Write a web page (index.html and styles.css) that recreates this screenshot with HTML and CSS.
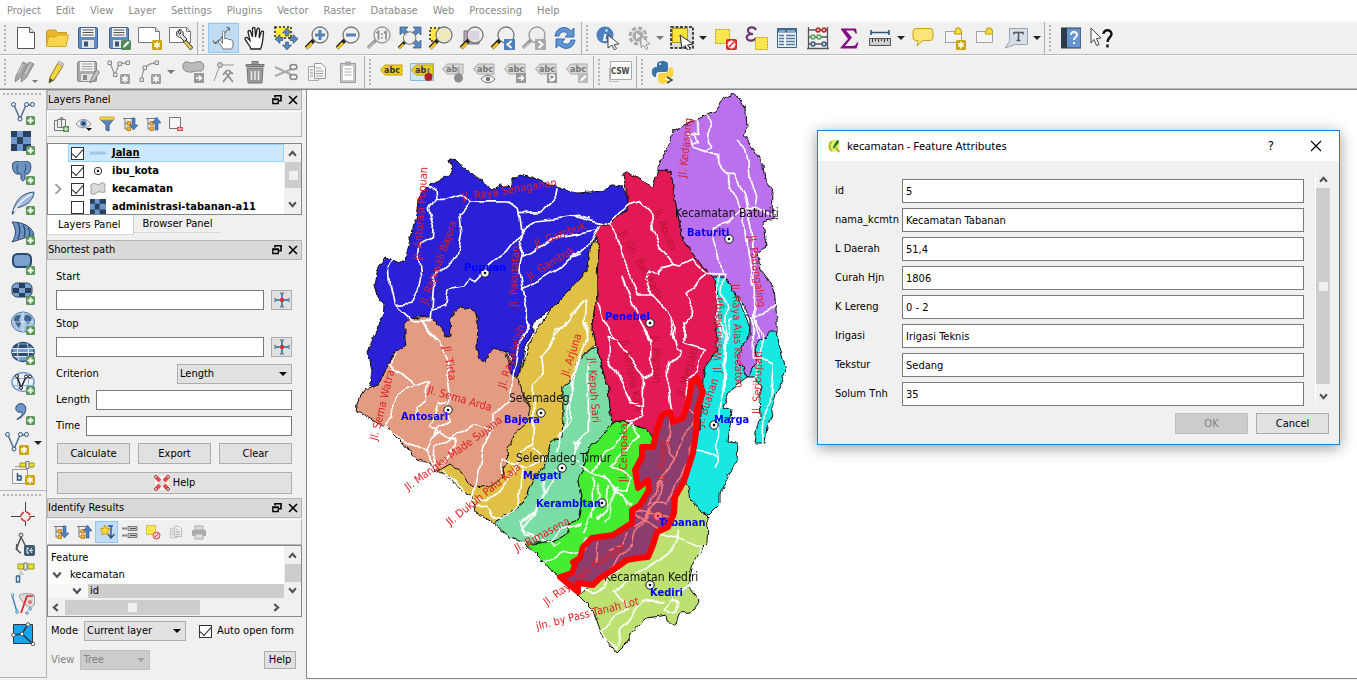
FILE: index.html
```html
<!DOCTYPE html>
<html lang="en">
<head>
<meta charset="utf-8">
<title>QGIS</title>
<link rel="stylesheet" href="styles.css">
</head>
<body>
<svg class="sprite" aria-hidden="true">
<defs>
<symbol id="b-plus" viewBox="0 0 24 24"><rect x="15" y="15" width="9" height="9" rx="1.5" fill="#5a9456"/><path d="M19.500 16.500v6M16.500 19.500h6" stroke="#fff" stroke-width="2"/></symbol>
<symbol id="b-star" viewBox="0 0 24 24"><rect x="14" y="14" width="10" height="10" rx="1.500" fill="#c8a40a"/><path d="M19 15.500v7M16 17.300l6 3.400M22 17.300l-6 3.400" stroke="#fff" stroke-width="1.500"/></symbol>
<symbol id="b-gstar" viewBox="0 0 24 24"><rect x="13" y="14" width="10" height="10" rx="1.500" fill="#9c9c9c"/><path d="M18 15.500v7M15 17.300l6 3.400M21 17.300l-6 3.400" stroke="#fff" stroke-width="1.500"/></symbol>
<symbol id="mag" viewBox="0 0 24 24"><path d="M9 14l-8 8" stroke="#222" stroke-width="4"/><path d="M7 17l-5.500 5.500" stroke="#f5c31c" stroke-width="2.500"/><circle cx="15" cy="9" r="8" fill="#f0f0ee" fill-opacity=".85" stroke="#777" stroke-width="1.300"/></symbol>
<symbol id="gmag" viewBox="0 0 24 24"><path d="M9 14l-8 8" stroke="#999" stroke-width="3.500"/><path d="M7 17l-5.500 5.500" stroke="#ccc" stroke-width="1.500"/><circle cx="15" cy="9" r="8" fill="#eee" stroke="#999" stroke-width="1.300"/></symbol>
<symbol id="new" viewBox="0 0 24 24"><path d="M3.500 1.500h12l5 5v16h-17z" fill="#fff" stroke="#555"/><path d="M15.500 1.500v5h5" fill="#ddd" stroke="#555"/></symbol>
<symbol id="open" viewBox="0 0 24 24"><path d="M1.500 20V5.500l2-1.500h7l2 2.500h9V12" fill="#e9b62a" stroke="#c79a1c"/><path d="M1.500 20.500l2-9.500h7l2-2h11l-2.500 11.500z" fill="#fad64f" stroke="#d5a824"/></symbol>
<symbol id="save" viewBox="0 0 24 24"><rect x="2.500" y="1.500" width="19" height="21" rx="1.500" fill="#5e8cc2" stroke="#3f6693"/><path d="M5 2h14v9H5z" fill="#f4f4f4"/><path d="M6.500 4h11M6.500 6.500h11M6.500 9h11" stroke="#555"/><path d="M6 14h12v8H6z" fill="#e4e4e4"/><path d="M8 15.500h4v5H8z" fill="#34567e"/></symbol>
<symbol id="gsave" viewBox="0 0 24 24"><rect x="1.500" y="1.500" width="19" height="20" rx="1.500" fill="#aaa" stroke="#8a8a8a"/><path d="M4 2h14v9H4z" fill="#f4f4f4"/><path d="M5.500 4h11M5.500 6.500h11M5.500 9h11" stroke="#999"/><path d="M5 14h12v7H5z" fill="#e4e4e4"/><path d="M7 15h4v5H7z" fill="#888"/><path d="M14 23l1.500-5 5-8 3 2-5 8z" fill="#c4c4c4" stroke="#808080"/></symbol>
<symbol id="saveas" viewBox="0 0 24 24"><use href="#save"/><rect x="14" y="14" width="10" height="10" rx="1.500" fill="#4f8a58"/><path d="M16 22l1-3 4-4 1.500 1.500-4 4z" fill="#fff"/></symbol>
<symbol id="layout" viewBox="0 0 24 24"><path d="M.5 1.500h17l4 4v11H.5z" fill="#fff" stroke="#777"/><path d="M17.500 1.500v4h4" fill="#ddd" stroke="#777"/><use href="#b-star"/></symbol>
<symbol id="manager" viewBox="0 0 24 24"><path d="M.5 1.500h17l4 4v11H.5z" fill="#fff" stroke="#777"/><path d="M17.500 1.500v4h4" fill="none" stroke="#777"/><path d="M15 14l8 9" stroke="#444" stroke-width="4"/><path d="M16 15.500l6.500 7" stroke="#f0cc50" stroke-width="2.500"/><path d="M9 4.500c-3 3-1 7 2.500 7l4 4 2.500-2.500-4-4c1-3-1-5.500-4-5.500l2 3.500-1.500 1.500z" fill="#ddd" stroke="#333"/></symbol>
<symbol id="touch" viewBox="0 0 24 24"><path d="M11 23c-1-3-4-5-5-8 0-1.500 2-1.500 3 .5l1.500 2V6.500c0-2 2.300-2 2.300 0V13c1.500-1 3-.5 3.700.5 3-.5 4.500 1 4.500 3.500v3l-1.500 3z" fill="#fff" stroke="#777"/><path d="M3 16.500c3-1 6-3 7-6M13 7c1-2 2-3 4-4.500M1 14.500l1.500 3 3-.5M14.500 1.500l3 .5-.5 3" fill="none" stroke="#555"/></symbol>
<symbol id="hand" viewBox="0 0 24 24"><path d="M8 23c-1-4-5-7-6-10 0-2 2-2 3-.5l2 2L5 6c0-2 2.300-2 2.800 0L9.500 11V3c0-2 2.500-2 2.500 0l.5 8L14 3.500c.5-2 2.500-1.500 2.500.5L16.200 12l2-6c.5-1.500 2.800-1 2.300.5-.5 4-.5 11-3 16.500z" fill="#fff" stroke="#222" stroke-width="1.300"/></symbol>
<symbol id="panto" viewBox="0 0 24 24"><path d="M1 1h16v11H1z" fill="#ffec3d" stroke="#222" stroke-width="1.500" stroke-dasharray="2 2"/><path d="M13 2l4.500 5h-3v3h-3V7h-3zM13 24l4.500-5h-3v-3h-3v3h-3zM1 13l5-4.500v3h3v3H6v3zM24 13l-5-4.500v3h-3v3h3v3z" fill="#5a86bf" stroke="#35567f" stroke-width=".7"/></symbol>
<symbol id="zin" viewBox="0 0 24 24"><use href="#mag"/><path d="M15 4v10M10 9h10" stroke="#5383b8" stroke-width="3"/></symbol>
<symbol id="zout" viewBox="0 0 24 24"><use href="#mag"/><path d="M10 9h10" stroke="#5383b8" stroke-width="3"/></symbol>
<symbol id="z11" viewBox="0 0 24 24"><use href="#gmag"/><path d="M9.500 7l2-1.500v8M17 7l2-1.500v8M14.800 7.500v1.500M14.800 11v1.500" fill="none" stroke="#888" stroke-width="1.600"/></symbol>
<symbol id="zfull" viewBox="0 0 24 24"><path d="M2 1h8L7.500 3.500 11 7 8 10 4.500 6.500 2 9zM23 1h-8l2.500 2.500L14 7l3 3 3.500-3.500L23 9zM23 22h-8l2.500-2.500L14 16l3-3 3.500 3.500L23 14z" fill="#5a86bf" stroke="#35567f" stroke-width=".7"/><g transform="translate(0 5) scale(.78)"><use href="#mag" width="24" height="24"/></g></symbol>
<symbol id="zsel" viewBox="0 0 24 24"><path d="M1 2h13v13H1z" fill="#ffe640" stroke="#222" stroke-width="1.500" stroke-dasharray="2 2"/><use href="#mag"/><circle cx="15" cy="9" r="6.500" fill="#f0eabb"/></symbol>
<symbol id="zlay" viewBox="0 0 24 24"><path d="M4 5h15v13H4z" fill="#b9a9bd" stroke="#806f85"/><use href="#mag"/><path d="M9 5h10v9H9z" fill="#d5ccd8" opacity=".7"/></symbol>
<symbol id="zprev" viewBox="0 0 24 24"><use href="#mag"/><path d="M13 13h11v11H13z" fill="#4e80b7"/><path d="M20.500 15l-4 3.500 4 3.500" fill="none" stroke="#fff" stroke-width="2"/></symbol>
<symbol id="znext" viewBox="0 0 24 24"><use href="#gmag"/><path d="M13 13h11v11H13z" fill="#aaa"/><path d="M16.500 15l4 3.500-4 3.500" fill="none" stroke="#fff" stroke-width="2"/></symbol>
<symbol id="refresh" viewBox="0 0 24 24"><path d="M2 10C3 1 13-1 18 5l3-3v9h-9l3-3C11 4 7 6 6 10z" fill="#5d94d3" stroke="#3a6eae"/><path d="M22 14c-1 9-11 11-16 5l-3 3v-9h9l-3 3c4 4 8 2 9-2z" fill="#5d94d3" stroke="#3a6eae"/></symbol>
<symbol id="ident" viewBox="0 0 24 24"><circle cx="9" cy="9" r="8.500" fill="#4d80bd"/><path d="M10.500 3.500v2M9.500 8L8 14h2.500" fill="none" stroke="#fff" stroke-width="2"/><path d="M12 9l11 9-5 .5 2.500 4-2 1.500-2.500-5-4 3z" fill="#fff" stroke="#444"/></symbol>
<symbol id="gear" viewBox="0 0 24 24"><circle cx="11" cy="10" r="8" fill="#e8e8e8" stroke="#a8a8a8" stroke-width="3" stroke-dasharray="4 2.280"/><circle cx="11" cy="10" r="5.500" fill="#aaa"/><path d="M9 7l5 3-5 3z" fill="#eee"/><path d="M14 10l9 8-4 .5 2 4-2 1-2-4-3 2z" fill="#eee" stroke="#999"/></symbol>
<symbol id="select" viewBox="0 0 24 24"><path d="M1 1h22v21H1z" fill="#ddd" stroke="#111" stroke-width="1.500" stroke-dasharray="3 1.500"/><path d="M2.500 2.500h15v14h-15z" fill="#f9e53a" stroke="#b59b1a"/><path d="M10 9l13 9-5.500 1 3 4-2.500 1.500-3-5-3 3z" fill="#fff" stroke="#222"/></symbol>
<symbol id="desel" viewBox="0 0 24 24"><path d="M2.500 3.500h14v14h-14z" fill="#fbe64d" stroke="#b9a112" stroke-dasharray="2 1"/><rect x="13" y="13" width="11" height="11" rx="2" fill="#d9262b"/><circle cx="18.500" cy="18.500" r="3.700" fill="#fff" stroke="#f6bcbc"/><path d="M16 21l5-5" stroke="#d9262b" stroke-width="1.500"/></symbol>
<symbol id="eps" viewBox="0 0 24 24"><path d="M12 4C10 0 4 1 4 4.500 4 7 7 8 9 8 4 8 2 10 3 12.500c1 3 7 3 9-.5" fill="none" stroke="#66396f" stroke-width="2.200"/><path d="M11.500 11.500h12v12h-12z" fill="#fbe64d" stroke="#b9a112" stroke-dasharray="2 1"/></symbol>
<symbol id="table" viewBox="0 0 24 24"><path d="M2.500 2.500h19v19h-19z" fill="#eef3f8" stroke="#35618b"/><path d="M2.500 2.500h19v4h-19z" fill="#3f6b94"/><path d="M4 5h6M12 5h8" stroke="#cfe0ee"/><path d="M4 9.500h5M4 12.500h5M4 15.500h5M4 18.500h5M11 9.500h9M11 12.500h9M11 15.500h9M11 18.500h9" stroke="#54799c" stroke-width="1.300"/></symbol>
<symbol id="abacus" viewBox="0 0 24 24"><path d="M2.500 1v21M21.500 1v21M1 22.500h22M2.500 4h19M2.500 11h19M2.500 18h19" stroke="#555" stroke-width="1.300"/><g stroke-width="1.300"><circle cx="12" cy="4" r="2" fill="#fbb" stroke="#b22"/><circle cx="18" cy="4" r="2" fill="#fbb" stroke="#b22"/><circle cx="7" cy="11" r="2" fill="#cfc" stroke="#5a9a5a"/><circle cx="13" cy="11" r="2" fill="#cfc" stroke="#5a9a5a"/><circle cx="7" cy="18" r="2" fill="#cdf" stroke="#357"/><circle cx="18" cy="18" r="2" fill="#cdf" stroke="#357"/></g></symbol>
<symbol id="sigma" viewBox="0 0 24 24"><path d="M4 2.500h15l1 5h-1.500c-1-2.500-2-3-4-3H9l6 7-7 8.500h7c3 0 4-1 5-3.500h1.500l-2 6H3.500v-1L11 13 4 3.500z" fill="#850c85"/></symbol>
<symbol id="ruler" viewBox="0 0 24 24"><path d="M3 6.500h18M3 4v5M21 4v5" stroke="#2c5777" stroke-width="1.600"/><path d="M1.500 12.500h21v7h-21z" fill="#ceced0" stroke="#555"/><path d="M4.500 13v3M7.500 13v2M10.500 13v3M13.500 13v2M16.500 13v3M19.500 13v2" stroke="#333"/></symbol>
<symbol id="bubble" viewBox="0 0 24 24"><path d="M5 2.500h14a3 3 0 0 1 3 3v6a3 3 0 0 1-3 3h-7L6 20l1-5.500H5a3 3 0 0 1-3-3v-6a3 3 0 0 1 3-3z" fill="#fbe478" stroke="#c9a21b"/></symbol>
<symbol id="bkm" viewBox="0 0 24 24"><path d="M3.500 5.500h16v11h-16z" fill="#f4f4f4" stroke="#555" stroke-dasharray="1 1"/><path d="M14 2h4v2h1.500v4h-7V5H14z" fill="#fbe03a" stroke="#b99a10"/></symbol>
<symbol id="newbkm" viewBox="0 0 24 24"><use href="#bkm"/><use href="#b-star"/></symbol>
<symbol id="textann" viewBox="0 0 24 24"><path d="M5.500 2.500h18v16h-12L1 22l4.500-6.500z" fill="#d6dfe8" stroke="#9aa5b0"/><path d="M10 6.500h9M14.500 6.500v8M12.500 14.500h4M10 6v2.500M19 6v2.500" stroke="#555" stroke-width="1.500"/></symbol>
<symbol id="book" viewBox="0 0 24 24"><path d="M2 1.500h20v21H2z" fill="#2c3a49"/><path d="M8 2.500h13.500v19H8z" fill="#6495d0"/><path d="M12 9c0-4 6-4 6 0 0 2-3 2-3 5M15 16v2" fill="none" stroke="#fff" stroke-width="1.800"/></symbol>
<symbol id="whats" viewBox="0 0 24 24"><path d="M1 2l10 10-4.500.5 2.500 6-2.500 1-2.500-6L1 17z" fill="#fff" stroke="#444"/><path d="M13.500 8c0-5 8-5 8 0 0 3-4 4-4 8M17.500 18.500v3" fill="none" stroke="#111" stroke-width="2.400"/></symbol>
<symbol id="pens" viewBox="0 0 24 24"><path d="M1 22l1-6L9 2l4 2-7 14zM7 22l1-6 7-14 5 2-8 14z" fill="#a9a9a9" stroke="#8a8a8a"/><path d="M4 13l5-9M11 14l6-11" stroke="#d6d6d6"/><path d="M18 20h6l-3 3z" fill="#777"/></symbol>
<symbol id="pen" viewBox="0 0 24 24"><path d="M4 23l1-6 8-14 5 3-9 14z" fill="#f2d544" stroke="#8d7a20"/><path d="M14 1l5 3-1.500 2.500-5-3z" fill="#ccc" stroke="#888" stroke-width=".6"/><path d="M4 23l.7-5 3.800 2.300z" fill="#555"/></symbol>
<symbol id="gvec" viewBox="0 0 24 24"><path d="M3 3l5 12 4-11 5-1h5" fill="none" stroke="#999" stroke-width="1.300"/><g fill="#e8e8e8" stroke="#888"><path d="M1 1h3.500v3.500H1zM6.500 13H10v3.500H6.500zM11 2h3.500v3.500H11zM19 1h3.500v3.500H19z"/></g><use href="#b-gstar"/></symbol>
<symbol id="garc" viewBox="0 0 24 24"><path d="M4 19C4 9 9 3 18 3" fill="none" stroke="#999" stroke-width="1.300"/><g fill="#e8e8e8" stroke="#888"><path d="M2 18h3.500v3.500H2zM5 6h3.500v3.500H5zM17 1h3.500v3.500H17z"/></g><use href="#b-gstar"/></symbol>
<symbol id="gmove" viewBox="0 0 24 24"><path d="M3 3c3-3 6 1 9 0s8-3 10 1 0 8-4 7-6 2-10 1C3 12 0 7 3 3z" fill="#bbb" stroke="#888"/><rect x="13" y="13" width="10" height="10" fill="#999"/><path d="M15 18h5M18 15.500l2.500 2.500-2.500 2.500" fill="none" stroke="#fff" stroke-width="1.500"/></symbol>
<symbol id="gnode" viewBox="0 0 24 24"><path d="M2 21L8 5h14" fill="none" stroke="#999"/><circle cx="8" cy="5" r="2.500" fill="#ccc" stroke="#888"/><path d="M11 22l8-10M13 12l8 10M16 10l5 4M11 15l4-5" stroke="#909090" stroke-width="1.800"/></symbol>
<symbol id="trash" viewBox="0 0 24 24"><path d="M4 8h16l-1 15H5z" fill="#999" stroke="#777"/><path d="M8.500 11v9M12 11v9M15.500 11v9" stroke="#eee" stroke-width="1.500"/><path d="M3 4.500h18v2H3zM9 4V1.500h6V4" fill="#999" stroke="#777"/></symbol>
<symbol id="cut" viewBox="0 0 24 24"><path d="M1 7l17 8M1 16L18 9" stroke="#aaa" stroke-width="2"/><ellipse cx="19.500" cy="7" rx="3.500" ry="2.500" fill="none" stroke="#888" stroke-width="1.500"/><ellipse cx="19.500" cy="17" rx="3.500" ry="2.500" fill="none" stroke="#888" stroke-width="1.500"/></symbol>
<symbol id="copy" viewBox="0 0 24 24"><path d="M3.500 6.500h10v14h-10z" fill="#f2f2f2" stroke="#aaa"/><path d="M9.500 3.500h7l4 4v11h-11z" fill="#f8f8f8" stroke="#999"/><path d="M11 8h5M11 11h7M11 13.500h7M11 16h7M5 10h3M5 13h3M5 16h3" stroke="#999"/></symbol>
<symbol id="paste" viewBox="0 0 24 24"><path d="M4.500 3.500h15v19h-15z" fill="#c9c9c9" stroke="#999"/><path d="M7 6h10v14H7z" fill="#fff"/><path d="M9 1.500h6V5H9z" fill="#aaa"/><path d="M8.500 9h7M8.500 12h7M8.500 15h7" stroke="#aaa"/></symbol>
<symbol id="tag" viewBox="0 0 24 24"><path d="M6 5h17v10H6l-4.500-5z" fill="#ecd21f" stroke="#c1a500"/></symbol>
<symbol id="gtag" viewBox="0 0 24 24"><path d="M6 4h16v10H6L1.500 9z" fill="#d8d8d8" stroke="#a8a8a8"/></symbol>
<symbol id="python" viewBox="0 0 24 24"><path d="M6 7V4c0-4 11-4 11 0v6c0 2-2 2-3 2H8c-3 0-3 3-3 5-5 1-6-10 0-10z" fill="#3674a8"/><circle cx="9" cy="4" r="1" fill="#fff"/><path d="M18 7c6-1 6 10 1 11h-5v2h3c0 5-10 5-10 0v-4c0-3 2-3 4-3h3c3 0 4-2 4-6z" fill="#fdd443"/><path d="M16 17l5 3-5 3" fill="none" stroke="#444" stroke-width="1.500"/></symbol>
<symbol id="vec" viewBox="0 0 24 24"><path d="M3 4l6 14 6-14h6" fill="none" stroke="#4f7193" stroke-width="1.500"/><g fill="#e4edf6" stroke="#35567a"><circle cx="2.500" cy="3.500" r="2"/><circle cx="9" cy="18" r="2"/><circle cx="15.500" cy="3.500" r="2"/><circle cx="21.500" cy="3.500" r="2"/></g></symbol>
<symbol id="addvec" viewBox="0 0 24 24"><use href="#vec"/><use href="#b-plus"/></symbol>
<symbol id="newvec" viewBox="0 0 24 24"><use href="#vec"/><use href="#b-star"/></symbol>
<symbol id="checker" viewBox="0 0 24 24"><path d="M0 0h20v20H0z" fill="#6f97c9"/><path d="M0 0h6v6H0zM12 0h8v6h-8zM6 6h6v7H6zM0 13h6v7H0zM12 13h8v7h-8z" fill="#27405f"/></symbol>
<symbol id="addras" viewBox="0 0 24 24"><use href="#checker"/><use href="#b-plus"/></symbol>
<symbol id="pg" viewBox="0 0 24 24"><path d="M2 2c4-3 14-3 17 0 2 4 0 10-2 11h-3v5c-1 3-4 2-4-1v-4H7C4 14 0 8 2 2z" fill="#6e94c4" stroke="#2b4b72"/><path d="M7 3c-2 4-1 8 1 9M14 3c2 3 0 7-1 9" fill="none" stroke="#2b4b72"/><use href="#b-plus"/></symbol>
<symbol id="feather" viewBox="0 0 24 24"><path d="M1 23C4 10 10 2 23 1c0 7-6 13-14 15l-4 1-3 6z" fill="#9db9da" stroke="#385a80"/><path d="M3 20C8 12 14 6 21 3" fill="none" stroke="#eef4fa" stroke-width="1.500"/><use href="#b-plus"/></symbol>
<symbol id="mssql" viewBox="0 0 24 24"><path d="M1 1c10 0 20 4 22 13L1 21C6 14 5 7 1 1z" fill="#6e94c4" stroke="#29496f"/><path d="M7 2c3 6 2 11 0 16M12 4c3 5 2 9 1 12M17 7c2 3 2 6 1 8" fill="none" stroke="#29496f" stroke-width="1.300"/><use href="#b-plus"/></symbol>
<symbol id="ora" viewBox="0 0 24 24"><rect x="2" y="3" width="18" height="13" rx="4.500" fill="#7ba1d1" stroke="#29496f" stroke-width="2"/><use href="#b-plus"/></symbol>
<symbol id="orar" viewBox="0 0 24 24"><rect x="1" y="2" width="20" height="14" rx="5" fill="#7ba1d1" stroke="#29496f"/><path d="M8 2h6v5H8zM2 7h6v5H2zM14 7h6v5h-6zM8 12h6v4H8z" fill="#27405f"/><use href="#b-plus"/></symbol>
<symbol id="wms" viewBox="0 0 24 24"><ellipse cx="12" cy="11" rx="11.500" ry="10" fill="#a9c5e6" stroke="#567ba5"/><path d="M3 7c3-4 5-3 7-3l-2 5 2 3-2 5c-2-3-5-5-5-10zM14 4c3-1 6 1 7 3l-2 5-3 1-3-5z" fill="#3f658f"/><path d="M1 11h22M12 1v20" stroke="#dce8f4" stroke-width=".8"/><use href="#b-plus"/></symbol>
<symbol id="wcs" viewBox="0 0 24 24"><ellipse cx="12" cy="11" rx="11" ry="9.500" fill="#7ba1d1" stroke="#29496f" stroke-width="1.500"/><path d="M5 3.500h14v4H2zM1.500 11.500h21l-3 4H4z" fill="#29496f"/><path d="M1 7.500h22M1 11.500h22M3 15.500h18M8 2c-2 6-2 12 0 18M16 2c2 6 2 12 0 18" fill="none" stroke="#dce8f4"/><use href="#b-plus"/></symbol>
<symbol id="wfs" viewBox="0 0 24 24"><ellipse cx="12" cy="11" rx="11" ry="9.500" fill="#eaf1f9" stroke="#6f97c9" stroke-width="1.500"/><path d="M1 7.500h22M2 14.500h20M8 2c-2 6-2 12 0 18M16 2c2 6 2 12 0 18" fill="none" stroke="#8fb0d8"/><path d="M6 5l4 12 5-11h5" fill="none" stroke="#222" stroke-width="1.500"/><g fill="#fff" stroke="#222"><circle cx="6" cy="5" r="1.500"/><circle cx="10" cy="17" r="1.500"/><circle cx="15" cy="5.500" r="1.500"/><circle cx="19" cy="5.500" r="1.500"/></g><use href="#b-plus"/></symbol>
<symbol id="comma" viewBox="0 0 24 24"><path d="M6 18c5-3 6-5 5-7-4 1-7-1-6-5 1-4 8-5 9.500 0S12 16 6 18.500z" fill="#6f97c9" stroke="#29496f"/><use href="#b-plus"/></symbol>
<symbol id="gpx" viewBox="0 0 24 24"><path d="M1.500 8.500h15v14h-15zM4 5.500h15" fill="#f4f4f4" stroke="#999"/><path d="M9 2h6v4H9zM17 2h6v4h-6z" fill="#e8e22c" stroke="#999816"/><path d="M15 .5h3v7h-3z" fill="#eee" stroke="#777"/><path d="M6.500 12v7h3.500v-4H6.500" fill="none" stroke="#2f5579" stroke-width="1.500"/><use href="#b-star"/></symbol>
<symbol id="cross" viewBox="0 0 24 24"><path d="M14.500 0v24M0 14.500h24" stroke="#444"/><path d="M10 14.500h9M14.500 10v9" stroke="#f0f0f0" stroke-width="2"/><circle cx="14.500" cy="14.500" r="4.500" fill="none" stroke="#d33" stroke-width="1.500" stroke-dasharray="5.070 2"/></symbol>
<symbol id="cad" viewBox="0 0 24 24"><circle cx="10" cy="3" r="2" fill="#ddd" stroke="#555"/><path d="M10 5L5 18M10 5l5 10M6 12a7 7 0 0 0 4 9" fill="none" stroke="#555" stroke-width="1.500"/><rect x="13" y="13" width="11" height="11" rx="2" fill="#3c5a73"/><path d="M18 16h-2v5h2M18 18.500h4M21 16l-2 2.500 2 2.500" fill="none" stroke="#fff"/></symbol>
<symbol id="gps" viewBox="0 0 24 24"><path d="M7 2h6v5H7zM17 2h6v5h-6z" fill="#e8e22c" stroke="#99981c"/><path d="M13 1h3v7h-3z" fill="#eee" stroke="#777"/><path d="M5.500 14h3v6h-3z" fill="#fff" stroke="#3b678f" stroke-width="1.500"/><path d="M9 9c1 0 3 2 3 4M8 11c1 0 2 1 2 2" fill="none" stroke="#999"/></symbol>
<symbol id="topo" viewBox="0 0 24 24"><path d="M1 3l5 17" stroke="#4b85c0" stroke-width="1.500"/><path d="M8 4c1-3 14-3 15-1s1 8 0 10-4 3-7 1-6-6-8-10z" fill="#ddd" stroke="#999"/><path d="M22 4h-6l-6 17" fill="none" stroke="#d22" stroke-width="1.700"/><circle cx="19" cy="10" r="1.300" fill="#fff" stroke="#d22"/><g fill="#fff" stroke="#4b85c0"><circle cx="1.500" cy="3" r="1.300"/><circle cx="6" cy="20" r="1.300"/><circle cx="16" cy="21" r="1.300"/><circle cx="19" cy="17" r="1.300"/></g></symbol>
<symbol id="coord" viewBox="0 0 24 24"><path d="M2.500 2.500h19v19h-19z" fill="#12a5f4" stroke="#333"/><path d="M2.500 13L11 12l6-10M11 12l11 10" fill="none" stroke="#333" stroke-width="1.500"/><g fill="#fff" stroke="#555"><circle cx="17" cy="2.500" r="1.800"/><circle cx="2.500" cy="13" r="1.800"/><circle cx="11" cy="12" r="1.800"/><circle cx="22" cy="22" r="1.800"/></g></symbol>
<symbol id="p-add" viewBox="0 0 16 16"><path d="M4 4.500H1.500v10h9M4.500 3.500v8h8v-8zM6.500 3l2-2 2 2M8.500 1v10" fill="none" stroke="#777"/><path d="M10 10h6v6h-6z" fill="#5a9456"/><path d="M13 11v4M11 13h4" stroke="#fff"/></symbol>
<symbol id="p-eye" viewBox="0 0 16 16"><path d="M0 8c4-6 11-6 15 0-4 5-11 5-15 0z" fill="#eee" stroke="#888"/><circle cx="7.500" cy="7.500" r="3.200" fill="#5e86b5"/><circle cx="7.500" cy="7.500" r="1.300" fill="#123"/><path d="M10 12h6l-3 3z" fill="#111"/></symbol>
<symbol id="p-filter" viewBox="0 0 16 16"><path d="M1 3h14l-5 6v6l-3-1V9z" fill="#5a86bf" stroke="#3c618f"/><path d="M1 1h14v3H1z" fill="#f6d938" stroke="#b99a10" stroke-width=".7"/></symbol>
<symbol id="p-tree" viewBox="0 0 16 16"><path d="M1 2.500h9M3 3v10h2M3 7.500h2" fill="none" stroke="#777"/><path d="M5 5.500h3.500V9H5zM5 11h3.500v3.500H5z" fill="#f7b84b" stroke="#c77f16"/></symbol>
<symbol id="p-exp" viewBox="0 0 16 16"><use href="#p-tree"/><path d="M10 2h3v7h3l-4.500 5L7.500 9H10z" fill="#4c7fc0" stroke="#31588a" stroke-width=".6"/></symbol>
<symbol id="p-col" viewBox="0 0 16 16"><use href="#p-tree"/><path d="M10 14h3V7h3l-4.500-6-4 6H10z" fill="#4c7fc0" stroke="#31588a" stroke-width=".6"/></symbol>
<symbol id="p-rem" viewBox="0 0 16 16"><path d="M1.500 1.500h11v11h-11z" fill="#f7f7f7" stroke="#777"/><path d="M9 11h6v4H9z" fill="#e5484a"/><path d="M10 13h4" stroke="#fff"/></symbol>
<symbol id="p-auto" viewBox="0 0 16 16"><path d="M9 2h5M12 2v11M9 10l3 4 3.500-4" fill="none" stroke="#31588a" stroke-width="1.500"/><path d="M6 1l1.500 3.500L11 5 8.500 7.500 9 11 6 9.500 3 11l.5-3.500L1 5l3.500-.5z" fill="#ffd83b" stroke="#d8960e"/></symbol>
<symbol id="p-form" viewBox="0 0 16 16"><path d="M0 4.500h5M0 11.500h5" stroke="#888" stroke-width="2"/><path d="M6 2.500h9v4H6zM6 9.500h9v4H6z" fill="#ccc" stroke="#777"/><path d="M8 4.500h6M8 11.500h6" stroke="#555"/></symbol>
<symbol id="p-clear" viewBox="0 0 16 16"><path d="M1.500 1.500h9v9h-9z" fill="#fbe64d" stroke="#c8ae20" stroke-dasharray="2 1"/><circle cx="11.500" cy="11.500" r="3.500" fill="#f6c6c6" stroke="#d44"/><path d="M9.500 13.500l4-4" stroke="#d44"/></symbol>
<symbol id="p-print" viewBox="0 0 16 16"><path d="M4 2h8v4H4z" fill="#ddd" stroke="#aaa"/><path d="M1 6h14v6H1z" fill="#aaa"/><path d="M4 10h8v5H4z" fill="#ddd" stroke="#aaa"/></symbol>
<symbol id="pick" viewBox="0 0 16 16"><path d="M8 .5v15M.5 8h15" stroke="#3b95cf" stroke-width="2"/><path d="M6 0l2 4 2-4M6 16l2-4 2 4M0 6l4 2-4 2M16 6l-4 2 4 2" fill="none" stroke="#777" stroke-width=".9"/><circle cx="8" cy="8" r="2.200" fill="#e02a2a"/></symbol>
<symbol id="buoy" viewBox="0 0 16 16"><circle cx="8" cy="8" r="5" fill="none" stroke="#fff" stroke-width="4"/><path d="M3 3l3 3M13 3l-3 3M3 13l3-3M13 13l-3-3" stroke="#ec4a4a" stroke-width="4"/><g fill="none" stroke="#a33"><circle cx="2" cy="2" r="1.500"/><circle cx="14" cy="2" r="1.500"/><circle cx="2" cy="14" r="1.500"/><circle cx="14" cy="14" r="1.500"/></g></symbol>
<symbol id="float" viewBox="0 0 10 10"><path d="M3 2.500V.8h6v5H7" fill="none" stroke="#000" stroke-width="1.600"/><path d="M.8 4h5.500v4.500H.8zM.8 4.500h5.500" fill="none" stroke="#000" stroke-width="1.300"/></symbol>
<symbol id="x" viewBox="0 0 10 10"><path d="M1 1l8 8M9 1l-8 8" stroke="#000" stroke-width="1.600"/></symbol>
<symbol id="up" viewBox="0 0 8 8"><path d="M1 6l3-3.500L7 6" fill="none" stroke="#505050" stroke-width="1.800"/></symbol>
<symbol id="down" viewBox="0 0 8 8"><path d="M1 2l3 3.500L7 2" fill="none" stroke="#505050" stroke-width="1.800"/></symbol>
<symbol id="left" viewBox="0 0 8 8"><path d="M6 1L2.500 4 6 7" fill="none" stroke="#505050" stroke-width="1.800"/></symbol>
<symbol id="right" viewBox="0 0 8 8"><path d="M2 1l3.500 3L2 7" fill="none" stroke="#505050" stroke-width="1.800"/></symbol>
<symbol id="city" viewBox="-5 -5 10 10"><circle r="4.200" fill="#fff" stroke="#111"/><circle r="1.300"/></symbol>
<path id="tabanan" d="M697 378l6 14-6 18-1 23-3 20-9 28-9 16-1 16-6 14-11 5-4 13-5 12-10 1-11 2-14 10-13 8-7 7-15-2v9l-18-15 12-4 3-8-2-3 7-4 3-11 9-9 21-3 19-12v-13l8-5 9-15-1-10-10 8-3-18 7-13v-10h11l4-17 5-15 8-3 3 10 10-4 5-15 4-20z"/>
</defs>
</svg>

<nav class="menubar">
<button>Project</button><button>Edit</button><button>View</button><button>Layer</button><button>Settings</button><button>Plugins</button><button>Vector</button><button>Raster</button><button>Database</button><button>Web</button><button>Processing</button><button>Help</button>
</nav>

<div class="toolbar">
<div class="group"><i class="grip"></i>
<button class="tb" aria-label="New"><svg><use href="#new"/></svg></button>
<button class="tb" aria-label="Open"><svg><use href="#open"/></svg></button>
<button class="tb" aria-label="Save"><svg><use href="#save"/></svg></button>
<button class="tb" aria-label="Save as"><svg><use href="#saveas"/></svg></button>
<button class="tb" aria-label="New composer"><svg><use href="#layout"/></svg></button>
<button class="tb" aria-label="Composer manager"><svg><use href="#manager"/></svg></button>
</div>
<div class="group"><i class="grip"></i>
<button class="tb on" aria-label="Touch"><svg><use href="#touch"/></svg></button>
<button class="tb" aria-label="Pan"><svg><use href="#hand"/></svg></button>
<button class="tb" aria-label="Pan to selection"><svg><use href="#panto"/></svg></button>
<button class="tb" aria-label="Zoom in"><svg><use href="#zin"/></svg></button>
<button class="tb" aria-label="Zoom out"><svg><use href="#zout"/></svg></button>
<button class="tb" aria-label="Native zoom"><svg><use href="#z11"/></svg></button>
<button class="tb" aria-label="Zoom full"><svg><use href="#zfull"/></svg></button>
<button class="tb" aria-label="Zoom to selection"><svg><use href="#zsel"/></svg></button>
<button class="tb" aria-label="Zoom to layer"><svg><use href="#zlay"/></svg></button>
<button class="tb" aria-label="Zoom last"><svg><use href="#zprev"/></svg></button>
<button class="tb" aria-label="Zoom next"><svg><use href="#znext"/></svg></button>
<button class="tb" aria-label="Refresh"><svg><use href="#refresh"/></svg></button>
</div>
<div class="group"><i class="grip"></i>
<button class="tb" aria-label="Identify"><svg><use href="#ident"/></svg></button>
<button class="tb" aria-label="Run action"><svg><use href="#gear"/></svg></button>
<button class="drop dim" aria-label="Actions"></button>
<button class="tb" aria-label="Select"><svg><use href="#select"/></svg></button>
<button class="drop" aria-label="Select modes"></button>
<button class="tb" aria-label="Deselect"><svg><use href="#desel"/></svg></button>
<button class="tb" aria-label="Select by expression"><svg><use href="#eps"/></svg></button>
<button class="tb" aria-label="Attribute table"><svg><use href="#table"/></svg></button>
<button class="tb" aria-label="Field calculator"><svg><use href="#abacus"/></svg></button>
<button class="tb" aria-label="Statistics"><svg><use href="#sigma"/></svg></button>
<button class="tb" aria-label="Measure"><svg><use href="#ruler"/></svg></button>
<button class="drop" aria-label="Measure modes"></button>
<button class="tb" aria-label="Map tips"><svg><use href="#bubble"/></svg></button>
<button class="tb" aria-label="New bookmark"><svg><use href="#newbkm"/></svg></button>
<button class="tb" aria-label="Bookmarks"><svg><use href="#bkm"/></svg></button>
<button class="tb" aria-label="Text annotation"><svg><use href="#textann"/></svg></button>
<button class="drop" aria-label="Annotations"></button>
</div>
<div class="group last"><i class="grip"></i>
<button class="tb" aria-label="Help contents"><svg><use href="#book"/></svg></button>
<button class="tb" aria-label="What is this"><svg><use href="#whats"/></svg></button>
</div>
</div>

<div class="toolbar">
<div class="group"><i class="grip"></i>
<button class="tb" aria-label="Current edits"><svg><use href="#pens"/></svg></button>
<button class="tb" aria-label="Toggle editing"><svg><use href="#pen"/></svg></button>
<button class="tb" aria-label="Save edits"><svg><use href="#gsave"/></svg></button>
<button class="tb" aria-label="Add feature"><svg><use href="#gvec"/></svg></button>
<button class="tb" aria-label="Add curve"><svg><use href="#garc"/></svg></button>
<button class="drop dim" aria-label="Curve modes"></button>
<button class="tb" aria-label="Move feature"><svg><use href="#gmove"/></svg></button>
<button class="tb" aria-label="Node tool"><svg><use href="#gnode"/></svg></button>
<button class="tb" aria-label="Delete"><svg><use href="#trash"/></svg></button>
<button class="tb" aria-label="Cut"><svg><use href="#cut"/></svg></button>
<button class="tb" aria-label="Copy"><svg><use href="#copy"/></svg></button>
<button class="tb" aria-label="Paste"><svg><use href="#paste"/></svg></button>
</div>
<div class="group"><i class="grip"></i>
<button class="tb" aria-label="Labeling"><svg viewBox="0 0 24 24"><use href="#tag" width="24" height="24"/><text class="abc" x="5" y="13">abc</text></svg></button>
<button class="tb" aria-label="Pinned labels"><svg viewBox="0 0 24 24"><path d="M.5 3.500h23v17H.5z" fill="#cfe4f7" stroke="#8ab8e6"/><use href="#tag" width="24" height="24"/><text class="abc" x="5" y="13">ab</text><path d="M18.500 8v7" stroke="#777" stroke-width="2"/><circle cx="18.500" cy="17" r="4" fill="#b32020"/></svg></button>
<button class="tb" aria-label="Pin labels"><svg viewBox="0 0 24 24"><use href="#gtag" width="24" height="24"/><text class="abc dimtext" x="5" y="12">ab</text><path d="M17.500 7v8" stroke="#aaa" stroke-width="2"/><circle cx="17.500" cy="18" r="4.500" fill="#8c8c8c"/></svg></button>
<button class="tb" aria-label="Show labels"><svg viewBox="0 0 24 24"><use href="#gtag" width="24" height="24"/><text class="abc dimtext" x="5" y="12">abc</text><path d="M9 19c4-5 10-5 14 0-4 5-10 5-14 0z" fill="#eee" stroke="#777"/><circle cx="16" cy="19" r="2.200" fill="#777"/></svg></button>
<button class="tb" aria-label="Move label"><svg viewBox="0 0 24 24"><use href="#gtag" width="24" height="24"/><text class="abc dimtext" x="5" y="12">abc</text><path d="M13 13h10v10H13z" fill="#999"/><path d="M15 18h5M18 15.500l2.500 2.500-2.500 2.500" fill="none" stroke="#fff" stroke-width="1.500"/></svg></button>
<button class="tb" aria-label="Rotate label"><svg viewBox="0 0 24 24"><use href="#gtag" width="24" height="24"/><text class="abc dimtext" x="5" y="12">abc</text><path d="M13 13h10v10H13z" fill="#999"/><path d="M20.500 17a2.500 2.500 0 1 0-2.500 2.500 3 3 0 0 0 2.500-3v2c0 2-3 3-5 2" fill="none" stroke="#fff" stroke-width="1.300"/></svg></button>
<button class="tb" aria-label="Change label"><svg viewBox="0 0 24 24"><use href="#gtag" width="24" height="24"/><text class="abc dimtext" x="5" y="12">abc</text><path d="M13 13h10v10H13z" fill="#bbb"/><path d="M15 21.500l1-2.500 4-4 1.500 1.500-4 4z" fill="#fff"/></svg></button>
</div>
<div class="group"><i class="grip"></i>
<button class="tb" aria-label="CSW"><svg viewBox="0 0 24 24"><path d="M1.500 22V8M1 21.500h10" stroke="#bbb"/><path d="M2.500 1.500h21v18h-21z" fill="#fdfdfd" stroke="#aaa"/><text class="abc csw" x="3" y="14">CSW</text></svg></button>
</div>
<div class="group last"><i class="grip"></i>
<button class="tb" aria-label="Python"><svg><use href="#python"/></svg></button>
</div>
</div>

<main class="main">
<aside class="side">
<div class="sidegroup"><i class="hgrip"></i>
<button class="sb" aria-label="Add vector"><svg><use href="#addvec"/></svg></button>
<button class="sb" aria-label="Add raster"><svg><use href="#addras"/></svg></button>
<button class="sb" aria-label="Add PostGIS"><svg><use href="#pg"/></svg></button>
<button class="sb" aria-label="Add SpatiaLite"><svg><use href="#feather"/></svg></button>
<button class="sb" aria-label="Add MSSQL"><svg><use href="#mssql"/></svg></button>
<button class="sb" aria-label="Add Oracle"><svg><use href="#ora"/></svg></button>
<button class="sb" aria-label="Add GeoRaster"><svg><use href="#orar"/></svg></button>
<button class="sb" aria-label="Add WMS"><svg><use href="#wms"/></svg></button>
<button class="sb" aria-label="Add WCS"><svg><use href="#wcs"/></svg></button>
<button class="sb" aria-label="Add WFS"><svg><use href="#wfs"/></svg></button>
<button class="sb" aria-label="Add delimited text"><svg><use href="#comma"/></svg></button>
<button class="sb wide" aria-label="New layer"><svg><use href="#newvec"/></svg><i class="tri"></i></button>
<button class="sb" aria-label="New GPX"><svg><use href="#gpx"/></svg></button>
</div>
<div class="sidegroup"><i class="hgrip"></i>
<button class="sb" aria-label="Snap"><svg><use href="#cross"/></svg></button>
<button class="sb" aria-label="CAD tools"><svg><use href="#cad"/></svg></button>
<button class="sb" aria-label="GPS"><svg><use href="#gps"/></svg></button>
<button class="sb" aria-label="Topology"><svg><use href="#topo"/></svg></button>
<button class="sb" aria-label="Coordinates"><svg><use href="#coord"/></svg></button>
</div>
</aside>

<section class="dock">
<header class="docktitle"><span>Layers Panel</span><button aria-label="Float"><svg><use href="#float"/></svg></button><button aria-label="Close"><svg><use href="#x"/></svg></button></header>
<div class="paneltools">
<button aria-label="Add group"><svg><use href="#p-add"/></svg></button>
<button aria-label="Visibility"><svg><use href="#p-eye"/></svg></button>
<button aria-label="Filter"><svg><use href="#p-filter"/></svg></button>
<button aria-label="Expand all"><svg><use href="#p-exp"/></svg></button>
<button aria-label="Collapse all"><svg><use href="#p-col"/></svg></button>
<button aria-label="Remove layer"><svg><use href="#p-rem"/></svg></button>
</div>
<div class="tree layers">
<div class="rows">
<label class="layer sel"><i class="exp"></i><span class="row"><input type="checkbox" checked><svg viewBox="0 0 16 16"><path d="M0 8h16" stroke="#9ecbe8" stroke-width="3"/></svg><b class="under">Jalan</b></span></label>
<label class="layer"><i class="exp"></i><span class="row"><input type="checkbox" checked><svg viewBox="0 0 16 16"><circle cx="8" cy="8" r="3.700" fill="#fff" stroke="#333"/><circle cx="8" cy="8" r="1.200"/></svg><b>ibu_kota</b></span></label>
<label class="layer"><i class="exp"><svg viewBox="0 0 8 8"><path d="M2 0l4 4-4 4" fill="none" stroke="#a0a0a0" stroke-width="1.500"/></svg></i><span class="row"><input type="checkbox" checked><svg viewBox="0 0 16 16"><path d="M1 4c3-4 6 1 9-1s5-1 5 1-1 3 0 5-1 3-4 2-4 1-6 2-5 0-4-3-1-4 0-6z" fill="#d9d9d9" stroke="#999"/></svg><b>kecamatan</b></span></label>
<label class="layer"><i class="exp"></i><span class="row"><input type="checkbox"><svg viewBox="0 0 20 20"><use href="#checker" width="24" height="24"/></svg><b>administrasi-tabanan-a11</b></span></label>
</div>
<div class="vscroll"><svg><use href="#up"/></svg><div class="track"><i class="thumb t1"><i class="gripbox"></i></i></div><svg><use href="#down"/></svg></div>
</div>
<div class="tabs"><button class="tab active">Layers Panel</button><button class="tab">Browser Panel</button></div>

<header class="docktitle"><span>Shortest path</span><button aria-label="Float"><svg><use href="#float"/></svg></button><button aria-label="Close"><svg><use href="#x"/></svg></button></header>
<form class="path">
<label for="start">Start</label>
<div class="line pickrow"><input id="start" type="text"><button type="button" class="pick" aria-label="Pick start"><svg><use href="#pick"/></svg></button></div>
<label for="stop" class="second">Stop</label>
<div class="line pickrow"><input id="stop" type="text"><button type="button" class="pick" aria-label="Pick stop"><svg><use href="#pick"/></svg></button></div>
<div class="line crit"><label for="crit">Criterion</label><span class="combo"><select id="crit"><option>Length</option></select></span></div>
<div class="line"><label for="len">Length</label><input id="len" type="text"></div>
<div class="line"><label for="time">Time</label><input id="time" type="text"></div>
<div class="buttons"><button type="button" class="btn">Calculate</button><button type="button" class="btn">Export</button><button type="button" class="btn">Clear</button></div>
<button type="button" class="btn helpwide"><svg><use href="#buoy"/></svg>Help</button>
</form>

<header class="docktitle"><span>Identify Results</span><button aria-label="Float"><svg><use href="#float"/></svg></button><button aria-label="Close"><svg><use href="#x"/></svg></button></header>
<div class="paneltools">
<button aria-label="Expand tree"><svg><use href="#p-exp"/></svg></button>
<button aria-label="Collapse tree"><svg><use href="#p-col"/></svg></button>
<button class="on" aria-label="Expand new"><svg><use href="#p-auto"/></svg></button>
<button aria-label="Form"><svg><use href="#p-form"/></svg></button>
<button aria-label="Clear"><svg><use href="#p-clear"/></svg></button>
<button aria-label="Copy"><svg><use href="#copy"/></svg></button>
<button aria-label="Print"><svg><use href="#p-print"/></svg></button>
</div>
<div class="tree results">
<div class="upper">
<div class="rows"><div class="res head">Feature</div><div class="res"><svg><use href="#down"/></svg><span>kecamatan</span></div><div class="res child"><svg><use href="#down"/></svg><span class="hit">id</span></div></div>
<div class="vscroll"><svg><use href="#up"/></svg><div class="track"><i class="thumb t2"></i></div><svg><use href="#down"/></svg></div>
</div>
<div class="hscroll"><svg><use href="#left"/></svg><div class="track"><i class="thumb"><i class="gripbox"></i></i></div><svg><use href="#right"/></svg></div>
</div>
<div class="mode"><label for="mode">Mode</label><span class="combo"><select id="mode"><option>Current layer</option></select></span><label class="auto"><input type="checkbox" checked>Auto open form</label></div>
<div class="mode view"><label for="view">View</label><span class="combo off"><select id="view" disabled><option>Tree</option></select></span><button class="btn small">Help</button></div>
</section>

<section class="canvas">
<svg class="map" viewBox="307 90 1050 588" preserveAspectRatio="xMinYMin meet" role="img" aria-label="Tabanan map">
<defs>
<filter id="coast" x="-5%" y="-5%" width="110%" height="110%" color-interpolation-filters="sRGB"><feTurbulence type="fractalNoise" baseFrequency=".14" numOctaves="2" seed="4"/><feDisplacementMap in="SourceGraphic" scale="5" xChannelSelector="R" yChannelSelector="G"/></filter>
<filter id="bends" x="-5%" y="-5%" width="110%" height="110%" color-interpolation-filters="sRGB"><feTurbulence type="fractalNoise" baseFrequency=".07" numOctaves="1" seed="9"/><feDisplacementMap in="SourceGraphic" scale="9" xChannelSelector="R" yChannelSelector="G"/></filter>
</defs>
<g class="areas" filter="url(#coast)">
<path fill="#e0c045" d="M438 472L455 455 500 460 515 400 518 377 533 335 580 270 591 242 597 242 599 250 597 277 597 297 593 317 592 330 595 345 583 355 575 367 572 380 563 387 563 420 562 437 550 443 547 463 533 480 523 503 510 513 493 523 475 512 472 497 463 492 450 478z"/>
<path fill="#7cdca6" d="M563 387L572 380 575 367 583 355 593 348 598 347 600 360 608 387 610 407 612 423 610 430 602 437 588 448 585 463 578 480 582 503 578 520 570 523 568 533 557 540 540 543 527 543 510 537 493 523 510 513 523 503 533 480 547 463 550 443 562 437 563 420z"/>
<path fill="#44ed30" d="M612 423L617 420 628 423 640 427 648 430 660 450 660 500 600 580 560 577 550 570 543 562 533 552 525 545 540 543 557 540 568 533 570 523 578 520 582 503 578 480 585 463 588 448 602 437z"/>
<path fill="#18e8e2" d="M713 277L725 277 733 290 743 310 750 327 748 340 737 360 748 377 740 383 730 390 723 407 732 410 728 442 738 443 737 460 730 473 720 493 720 503 708 515 690 503 683 483 690 440 700 380z"/>
<path fill="#e21955" d="M623 175L628 172 640 180 653 187 658 170 671 171 675 200 683 240 697 260 713 277 716 290 718 303 715 320 717 340 717 350 705 367 703 380 700 430 660 450 648 430 640 427 628 423 617 420 612 423 610 407 608 387 600 360 598 347 595 345 592 330 593 317 597 297 597 277 599 250 596 233 600 224 609 224 615 218 627 210 628 197z"/>
<path fill="#bb71ee" d="M658 170L658 166 667 150 673 132 690 122 715 111 722 100 732 94 740 98 746 112 747 128 744 135 754 150 763 165 765 180 773 193 772 213 778 218 763 222 766 247 758 253 760 270 774 288 777 320 777 333 760 340 755 347 757 363 748 377 737 360 743 343 750 337 750 320 745 307 733 290 725 277 713 277 697 260 683 240 675 200 671 171z"/>
<path fill="#18e8e2" d="M767 338L768 332 776 332 778 340 786 370 780 385 773 400 773 413 767 427 765 443 754 443 757 427 760 417 759 393 762 387 755 377 748 377 757 363 755 347 760 340z"/>
<path fill="#bce170" d="M685 482L688 487 690 500 708 517 707 543 702 548 693 563 688 587 699 600 690 612 680 613 675 625 668 622 667 615 647 618 633 630 627 643 617 653 602 635 593 610 578 595 600 578 648 550 670 500z"/>
<path fill="#e39b82" d="M427 316L400 320 395 352 387 367 378 385 365 390 360 398 355 410 373 420 390 430 403 443 417 460 430 463 435 472 440 470 450 464 463 473 470 485 483 487 493 485 503 477 502 467 508 463 507 450 512 440 513 435 527 423 530 408 522 392 519 380 513 375 500 335 470 300 440 320z"/>
<path fill="#2a20d6" d="M449 159L457 160 466 170 473 174 493 190 500 185 510 187 514 177 520 175 537 179 550 185 560 187 567 191 577 193 603 191 612 185 623 186 628 197 627 210 615 218 609 224 600 224 596 233 596 240 591 243 588 267 582 277 567 293 550 310 533 323 533 332 527 340 523 357 518 377 513 375 508 367 512 360 507 352 493 349 488 355 486 363 478 357 477 347 478 323 475 310 460 307 450 318 451 337 447 338 442 328 435 321 427 316 417 316 405 323 405 340 406 345 395 352 387 367 378 385 370 387 372 370 368 353 373 337 383 317 384 305 378 297 375 285 378 267 385 257 400 262 405 260 412 233 417 210 418 200 423 190 433 183 453 173z"/>
</g>
<use href="#tabanan" fill="#8c3d6f"/>
<g class="roads" filter="url(#bends)">
<path transform="translate(350 90) scale(.33333)" d="M232 285L252 300 255 325 235 360 250 400 247 440 210 460 205 500 212 560 205 600 185 640 135 643 190 695 240 698 243 660 290 650 297 600 340 590 355 565 375 572 420 525 470 485 520 420 560 390 680 376 720 385M255 328L290 328 335 313 360 335 480 336 505 355 515 420 505 455 520 490 510 540 520 600 530 650 525 690 537 715 530 725M360 335L330 370 335 430 320 500 270 545 250 560 245 620 243 660M625 295L620 320 575 365 505 368M520 498L560 480 600 450 690 430M515 598L590 560 630 535 665 500 690 490M130 510L115 525 118 590 130 643M215 700L260 750M690 650L650 700 615 720 615 750"/>
<path transform="translate(570 90) scale(.33333)" d="M0 377L90 400 118 405M0 433L80 420M0 500L60 465 90 405M118 405L140 380 175 345 205 335 245 375 250 420 270 470 310 520M118 405L140 430 150 490 205 612 245 612 230 560 240 540 260 553 275 530 310 520 330 525 365 507 410 550 465 553 455 600 470 650 465 750M245 612L290 660 315 710 312 750M410 555L350 605 365 630 360 680 340 710 338 750M155 560L180 620 210 690 240 750M82 635L100 690 135 745M375 90L390 130 360 130 368 175 405 187 440 190 440 215 470 250 490 250 520 310 530 345 515 360 470 270 470 250M375 130L385 160 370 165M410 70L420 100 415 150 425 170 405 187M498 150L530 180 540 230 545 280 560 320 555 350 530 350M515 355L480 400 430 415 430 450 445 500 455 550M530 355L545 400 550 500 555 680 565 750M520 360L530 480 548 580M560 350L625 385M620 640L600 655 580 675 548 683 548 750M0 675L50 630 45 700 50 750M445 555L445 600 440 680 455 750"/>
<path transform="translate(350 320) scale(.33333)" d="M190 5L245 5M215 10L265 60 300 130 290 170 298 220 295 260 300 300 265 320 255 350M135 95L120 135 195 195 235 180 225 240 195 260 200 300M195 200L140 220 125 250 130 290 105 320 150 355 200 380 235 400 255 450M265 250L290 245M265 255L255 290 240 320 270 340 320 360 300 410 260 440M230 400L245 360 275 335M250 440L255 385 330 340 370 315 430 330 425 290 480 240 490 160 500 130 510 60 535 25 525 0M425 335L400 380 385 450 370 520 355 540M275 445L330 500 370 545 410 540 460 500 490 460 515 400 545 370 550 260 550 190 580 160 575 110 610 60 650 0M520 440L590 420 545 380M375 560L410 555 425 590 460 595 500 560 515 430M690 100L670 185 655 250 640 340 620 400M690 365L670 365 680 420 690 430M620 450L590 500 560 560 515 610 520 640 560 655M455 460L460 420 490 425 520 435"/>
<path transform="translate(560 320) scale(.33333)" d="M80 0L80 60 35 180 30 300 0 350M85 120L85 340 50 360 40 430M175 55L145 50 145 120 185 190 210 245 250 255M175 55L250 170 250 260 245 290 195 300M240 0L275 60 275 160 250 175M330 0L350 90 365 100 325 130 325 210 335 270M375 0L370 70 430 90 410 150 385 175 380 240M480 0L495 60 490 200 480 240 470 380 475 420 465 440M410 390L450 395 470 410M515 0L500 60 495 200 485 220M580 0L580 110 640 135 630 250 610 280 605 370M590 0L605 50 600 120 580 180 565 180M215 300L165 380 130 400 100 460M215 310L235 350 150 435 210 470 200 520 170 510M60 440L120 470 190 520M100 470L100 600M130 470L200 550M145 500L140 560 110 600"/>
<path transform="translate(490 480) scale(.33333)" d="M165 250L220 220 275 210 290 175M320 10L335 40 300 120 280 160M350 0L400 60 430 70M385 20L360 70 355 110 340 130M160 0L155 60 95 150 100 170 180 180 190 200 210 190M275 130L210 150 180 180M500 155L560 170 635 200 605 300 570 350M565 150L562 180 550 210 470 260 365 340 400 360 415 390 380 405 335 450 380 510 395 450 460 360 495 365 520 360M525 385L550 400 570 370 545 360 525 385M270 325L310 335 340 320 360 290 390 270"/>
</g>
<g class="roads hot" filter="url(#bends)">
<path transform="translate(560 320) scale(.33333)" d="M385 265L405 280 400 320 365 350 345 420 290 500 270 560M330 300L325 400 345 415M400 375L385 420 320 550 275 550"/>
<path transform="translate(490 480) scale(.33333)" d="M515 0L500 70 440 150 430 190 360 260M435 90L560 115M430 95L510 150M440 135L485 85M320 180L325 220 315 245M410 160L390 200 360 215"/>
</g>
<g class="streets">
<text transform="translate(421 260) rotate(-86)">Jl. Antorasi Pupuan</text>
<text transform="translate(427 305) rotate(-70)">Jl. Rajawali Bajera</text>
<text transform="translate(463 201) rotate(-9)">Jl. Raya Senaganan</text>
<text transform="translate(536 247) rotate(-20)">Jl. Gambuk</text>
<text transform="translate(530 280) rotate(-32)">Jl. Gambuk</text>
<text transform="translate(517 307) rotate(-88)">Jl. Pakutatan</text>
<text transform="translate(505 389) rotate(-72)">Jl. Raya Jelijih</text>
<text transform="translate(568 377) rotate(-72)">Jl. Arjuna</text>
<text transform="translate(443 347) rotate(80)">Jl. Tirta</text>
<text transform="translate(377 441) rotate(-76)">Jl. Sema Watra</text>
<text transform="translate(427 393) rotate(16)">Jl. Sema Arda</text>
<text transform="translate(408 491) rotate(-36)">Jl. Mangku Made Sujana</text>
<text transform="translate(450 526) rotate(-39)">Jl. Dukuh Palu Kaja</text>
<text transform="translate(686 178) rotate(-84)">Jl. Kedasong</text>
<text class="deep" transform="translate(654 211) rotate(68)">Jl. Apuan</text>
<text class="deep" transform="translate(619 233) rotate(60)">Jl. Gn. Batukaru</text>
<text transform="translate(748 236) rotate(82)">Jl. Padangaling</text>
<text transform="translate(732 284) rotate(88)">Jl. Raya Alas Kedaton</text>
<text transform="translate(721 373) rotate(-89)">Jl. Wisnu Marga</text>
<text transform="translate(588 358) rotate(86)">Jl. Kepuh Sari</text>
<text class="deep" transform="translate(621 341) rotate(78)">Jl. Kenana Kaja</text>
<text class="deep" transform="translate(652 336) rotate(88)">Jl. Pisman</text>
<text class="deep" transform="translate(684 397) rotate(-74)">Jl. Merpati</text>
<text transform="translate(703 427) rotate(-72)">Jl. Buahan</text>
<text transform="translate(760 414) rotate(-88)">Jl. Seribupati</text>
<text transform="translate(627 482) rotate(-90)">Jl. Cempaka</text>
<text transform="translate(665 481) rotate(-88)">Jl. Riang</text>
<text transform="translate(517 552) rotate(-28)">Jl. Bimasena</text>
<text transform="translate(547 606) rotate(-37)">Jl. Raya Yeh Gangga</text>
<text transform="translate(537 630) rotate(-14)">jln. by Pass Tanah Lot</text>
</g>
<g>
<use href="#city" x="480" y="268" width="10" height="10"/><use href="#city" x="724" y="234" width="10" height="10"/><use href="#city" x="645" y="318" width="10" height="10"/><use href="#city" x="443" y="405" width="10" height="10"/><use href="#city" x="536" y="408" width="10" height="10"/><use href="#city" x="557" y="463" width="10" height="10"/><use href="#city" x="597" y="498" width="10" height="10"/><use href="#city" x="645" y="580" width="10" height="10"/><use href="#city" x="709" y="420" width="10" height="10"/>
<circle cx="658" cy="516" r="4.500" fill="#f7787c" stroke="#c22a3c"/><circle cx="658" cy="516" r="1.300" fill="#b0203a"/>
</g>
<g class="districts"><text x="675" y="217">Kecamatan Baturiti</text><text x="509" y="402">Selemadeg</text><text x="516" y="462">Selemadeg Timur</text><text x="604" y="581">Kecamatan Kediri</text></g>
<g class="towns"><text x="464" y="271">Pupuan</text><text x="687" y="236">Baturiti</text><text x="605" y="320">Penebel</text><text x="401" y="420">Antosari</text><text x="504" y="423">Bajera</text><text x="523" y="479">Megati</text><text x="536" y="507">Kerambitan</text><text x="659" y="526">Tabanan</text><text x="650" y="596">Kediri</text><text x="714" y="423">Marga</text></g>
<use href="#tabanan" fill="none" stroke="#f00" stroke-width="6" stroke-linejoin="round"/>
</svg>
</section>

<div class="dialog" role="dialog" aria-label="Feature Attributes">
<header><svg viewBox="0 0 16 16"><path d="M6 1c6-1 9 4 7 8l1 5-4-1c-5 2-9-1-9-5s2-7 5-7z" fill="#e6ec6c"/><path d="M5 3C2 5 2 10 5 13M9 9l4 5" fill="none" stroke="#a9b63a" stroke-width="2"/><path d="M6 9l4-7 3-1-1 4-5 5z" fill="#1d7a1d"/></svg><span>kecamatan - Feature Attributes</span><button class="q" aria-label="Help">?</button><button class="close" aria-label="Close"><svg viewBox="0 0 12 12"><path d="M1 1l10 10M11 1L1 11" stroke="#000" stroke-width="1.100"/></svg></button></header>
<form class="attrs">
<div class="fields">
<label for="a1">id</label><input id="a1" type="text" value="5">
<label for="a2">nama_kcmtn</label><input id="a2" type="text" value="Kecamatan Tabanan">
<label for="a3">L Daerah</label><input id="a3" type="text" value="51,4">
<label for="a4">Curah Hjn</label><input id="a4" type="text" value="1806">
<label for="a5">K Lereng</label><input id="a5" type="text" value="0 - 2">
<label for="a6">Irigasi</label><input id="a6" type="text" value="Irigasi Teknis">
<label for="a7">Tekstur</label><input id="a7" type="text" value="Sedang">
<label for="a8">Solum Tnh</label><input id="a8" type="text" value="35">
</div>
<div class="vscroll"><svg><use href="#up"/></svg><div class="track"><i class="thumb full"><i class="gripbox"></i></i></div><svg><use href="#down"/></svg></div>
</form>
<footer><button class="btn" disabled>OK</button><button class="btn">Cancel</button></footer>
</div>
</main>
</body>
</html>
```
FILE: styles.css
```css
* { box-sizing: border-box; }
html, body { height: 100%; }
body {
  margin: 0;
  display: flex;
  flex-direction: column;
  background: #f0f0f0;
  color: #000;
  font: 11px/14px "DejaVu Sans Condensed", "Noto Sans", sans-serif;
  overflow: hidden;
}
button, input, select { font: inherit; color: inherit; margin: 0; }
button { border: 0; background: none; padding: 0; }
.sprite { position: absolute; width: 0; height: 0; }

.menubar { display: flex; gap: 15px; height: 21px; padding: 1px 7px 0; background: #fff; color: #8a8a8a; flex: none; }

.toolbar { display: flex; flex: none; height: 34px; border-top: 1px solid #fafafa; border-bottom: 1px solid #b8b8b8; }
.group { display: flex; align-items: center; padding-right: 1px; border-right: 1px solid #b0b0b0; }
.group.last { border-right: 0; }
.grip { width: 10px; height: 26px; flex: none; background: linear-gradient(#b4b4b4 50%, transparent 50%) 4px 0 / 2px 4px repeat-y; }
.tb { display: flex; align-items: center; justify-content: center; width: 31px; height: 30px; flex: none; }
.tb svg { width: 24px; height: 24px; }
.tb.on, .paneltools .on { background: #c0dcf3; border: 1px solid #90c8f6; }
.drop { display: flex; justify-content: center; align-items: center; width: 12px; height: 30px; flex: none; }
.drop::before, .tri { content: ""; border: 4px solid transparent; border-top-color: #222; border-bottom: 0; }
.drop.dim::before { border-top-color: #777; }
.abc { font: bold 9px "DejaVu Sans Condensed", sans-serif; fill: #333; }
.abc.dimtext { fill: #777; }
.abc.csw { font-size: 8px; fill: #444; }

.main { position: relative; display: flex; flex: 1; min-height: 0; border-top: 1px solid #85858c; }
.side { width: 47px; flex: none; border-right: 1px solid #b4b4b4; margin-bottom: 2px; border-bottom: 1px solid #b4b4b4; }
.sidegroup { display: flex; flex-direction: column; align-items: center; border-bottom: 1px solid #b4b4b4; padding-bottom: 2px; }
.sidegroup + .sidegroup { border-bottom: 0; }
.hgrip { width: 40px; height: 8px; flex: none; background: linear-gradient(90deg, #b4b4b4 50%, transparent 50%) 0 3px / 4px 2px repeat-x; }
.sb { display: flex; align-items: center; justify-content: center; width: 46px; height: 30px; flex: none; }
.sb svg { width: 24px; height: 24px; }
.sb.wide { justify-content: flex-start; padding-left: 5px; gap: 5px; }

.dock { width: 256px; flex: none; display: flex; flex-direction: column; padding-right: 1px; }
.docktitle { display: flex; align-items: center; gap: 6px; height: 20px; flex: none; background: #d9d9d9; border: 1px solid #b4b4b4; padding: 0 3px 0 0; }
.docktitle span { flex: 1; }
.docktitle button { width: 10px; height: 10px; }
.docktitle svg { width: 10px; height: 10px; display: block; }
.paneltools { display: flex; align-items: center; height: 26px; flex: none; margin-top: 1px; padding-left: 1px; border: 1px solid #b4b4b4; border-top-color: #fff; border-left-color: #fff; }
.paneltools button { display: flex; align-items: center; justify-content: center; width: 23px; height: 22px; }
.paneltools svg { width: 16px; height: 16px; }
.tree { display: flex; background: #fff; border: 1px solid #828790; overflow: hidden; flex: none; }
.layers { height: 72px; margin-top: 6px; }
.rows { flex: 1; min-width: 0; }
.layer { display: flex; height: 18px; }
.exp { width: 20px; flex: none; display: flex; align-items: center; justify-content: center; }
.exp svg { width: 10px; height: 10px; }
.row { display: flex; flex: 1; align-items: center; border: 1px solid transparent; padding-left: 2px; white-space: nowrap; min-width: 0; }
.row svg { width: 16px; height: 16px; margin: 0 6px; flex: none; }
.row b { font-size: 11px; }
.sel .row { background: #cce8ff; border-color: #99d1ff; }
.under { text-decoration: underline; }
input[type=checkbox] { appearance: none; width: 13px; height: 13px; flex: none; border: 1px solid #333; background: #fff; display: grid; place-items: center; }
input[type=checkbox]:checked::before { content: ""; width: 10px; height: 5px; border: solid #222; border-width: 0 0 1px 1px; transform: rotate(-48deg); margin-bottom: 3px; }
.vscroll { width: 17px; flex: none; display: flex; flex-direction: column; align-items: center; padding: 5px 0; gap: 4px; background: #f0f0f0; }
.vscroll svg, .hscroll svg { width: 9px; height: 9px; flex: none; }
.track { flex: 1; align-self: stretch; display: flex; }
.vscroll .track { flex-direction: column; }
.thumb { background: #cdcdcd; display: flex; align-items: center; justify-content: center; }
.gripbox { width: 9px; height: 9px; background: #f0f0f0; }
.t1 { height: 26px; margin-left: 1px; }
.t2 { height: 18px; margin-left: 1px; }
.full { flex: 1; margin-bottom: 4px; }
.tabs { display: flex; align-items: flex-start; height: 20px; flex: none; margin-bottom: 5px; }
.tab { height: 18px; padding: 0 9px; border-bottom: 1px solid #d9d9d9; }
.tab.active { height: 20px; padding: 1px 12px 0 10px; background: #fff; border-right: 1px solid #d0d0d0; border-left: 1px solid #e0e0e0; }

.path { display: flex; flex-direction: column; padding: 10px 10px 4px 9px; flex: none; }
.path input[type=text], .fields input { border: 1px solid #7a7a7a; background: #fff; padding: 0 3px; min-width: 0; border-radius: 0; }
.path .second { margin-top: 7px; }
.line { display: flex; align-items: center; gap: 6px; height: 20px; margin-top: 6px; }
.line.pickrow { gap: 7px; }
.line input[type=text] { flex: 1; height: 20px; }
.pick { width: 21px; height: 20px; border: 1px solid #adadad; background: #e1e1e1; display: flex; align-items: center; justify-content: center; }
.pick svg, .helpwide svg { width: 16px; height: 16px; }
.crit { justify-content: space-between; margin-top: 7px; }
.crit .combo { width: 115px; }
.combo { position: relative; display: flex; height: 20px; }
.combo select { appearance: none; width: 100%; height: 20px; padding: 0 2px; border: 1px solid #adadad; border-radius: 0; background: #e1e1e1; opacity: 1; }
.combo::after { content: ""; position: absolute; right: 5px; top: 8px; border: 4px solid transparent; border-top-color: #000; border-bottom: 0; pointer-events: none; }
.combo.off { color: #838383; }
.combo.off select { background: #ccc; border-color: #bfbfbf; }
.combo.off::after { border-top-color: #a0a0a0; }
.buttons { display: grid; grid-template-columns: repeat(3, 1fr); gap: 8px; margin: 7px 0 8px 1px; }
.btn { height: 21px; border: 1px solid #adadad; background: #e1e1e1; }
.btn:disabled { background: #ccc; border-color: #bfbfbf; color: #838383; }
.helpwide { display: flex; align-items: center; justify-content: center; gap: 3px; height: 22px; margin-left: 1px; }

.results { flex-direction: column; height: 72px; margin-bottom: 4px; }
.upper { display: flex; height: 52px; }
.res { display: flex; align-items: center; height: 18px; padding-left: 4px; gap: 8px; }
.res.head { padding-left: 3px; height: 20px; padding-top: 3px; }
.res svg { width: 10px; height: 10px; flex: none; }
.res.child { height: 14px; padding-left: 24px; background: #f7f7f7; gap: 6px; }
.hit { flex: 1; background: #cdcdcd; padding-left: 2px; }
.hscroll { display: flex; align-items: center; height: 18px; padding: 0 20px 0 3px; gap: 5px; background: #f0f0f0; }
.hscroll .thumb { width: 135px; height: 15px; }
.hscroll .track { align-self: center; }
.mode { display: flex; align-items: center; height: 20px; margin-bottom: 9px; padding-left: 4px; gap: 6px; }
.mode .combo { width: 102px; }
.auto { display: flex; align-items: center; gap: 5px; margin-left: 7px; }
.view > label { color: #838383; }
.view .combo { width: 70px; }
.small { width: 32px; height: 18px; margin-left: auto; margin-right: 6px; }

.canvas { flex: 1; min-width: 0; margin: 0 0 1px 3px; background: #fff; border-left: 1px solid #828790; border-bottom: 1px solid #828790; overflow: hidden; }
.map { display: block; width: 1050px; height: 588px; }
.areas path { stroke: #111; stroke-width: 1; stroke-linejoin: round; }
.roads path { fill: none; stroke: #fff; stroke-width: 5; stroke-linejoin: round; }
.hot path { stroke: #f7787c; }
.streets { fill: #e01f26; font-size: 11px; }
.deep { fill: #b5152f; }
.districts { fill: #111; font-size: 12px; }
.towns { fill: #00f; font-size: 11px; font-weight: bold; }

.dialog { position: absolute; left: 817px; top: 40px; width: 523px; border: 1px solid #1883d7; background: #f0f0f0; box-shadow: 0 3px 14px rgba(0, 0, 0, .4); }
.dialog header { display: flex; align-items: center; height: 30px; padding: 0 17px 0 9px; background: #fff; }
.dialog header svg { width: 15px; height: 15px; }
.dialog header span { flex: 1; margin-left: 5px; font: 11px/14px "Noto Sans", sans-serif; }
.dialog header .q { font-size: 13px; margin-right: 36px; }
.dialog header .close svg { width: 12px; height: 12px; display: block; }
.attrs { display: flex; margin: 9px 9px 0 17px; gap: 11px; }
.fields { flex: 1; display: grid; grid-template-columns: 61px 1fr; gap: 5px; column-gap: 6px; padding: 9px 0 0; align-items: center; }
.fields input { height: 24px; }
.attrs .vscroll { width: 15px; border-left: 1px solid #fff; }
.dialog footer { display: flex; justify-content: flex-end; gap: 8px; padding: 7px 10px 10px; }
.dialog footer .btn { width: 73px; }
```
